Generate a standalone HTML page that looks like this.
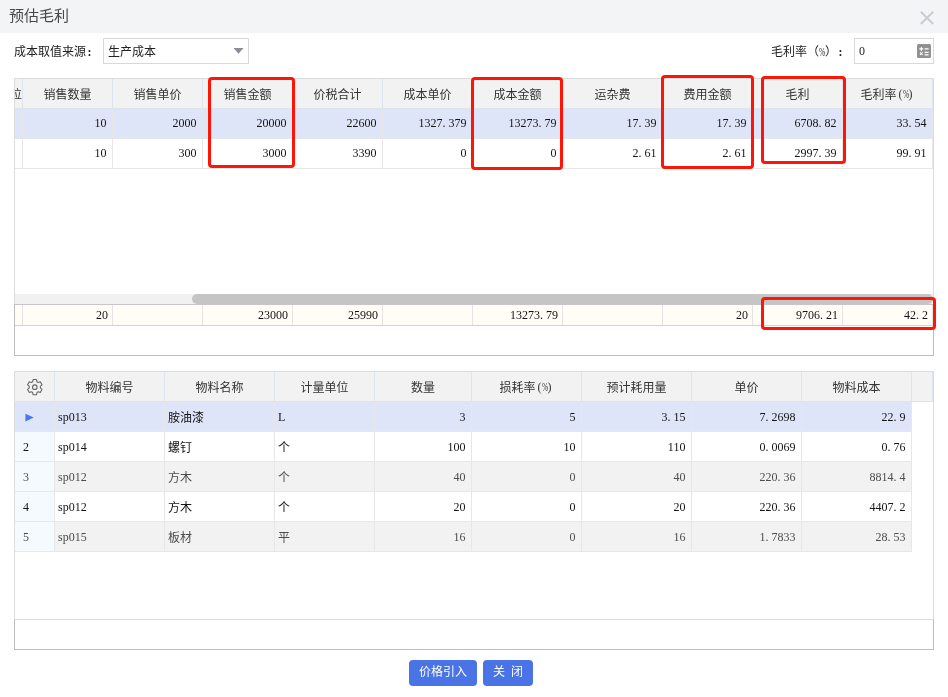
<!DOCTYPE html>
<html lang="zh-CN">
<head>
<meta charset="utf-8">
<title>预估毛利</title>
<style>
*{box-sizing:border-box;margin:0;padding:0}
body{will-change:transform}
html,body{width:948px;height:697px;overflow:hidden;background:#fff}
body{position:relative;font-family:"Liberation Serif","Noto Sans CJK SC",sans-serif;font-size:12px;color:#141414;line-height:1}
.abs{position:absolute}
#titlebar{left:0;top:0;width:948px;height:33px;background:#f3f4f6}
#title{left:9px;top:8px;font-size:15px;color:#484848;line-height:16px}
#close{left:920px;top:10.5px;width:14px;height:14px}
.lbl{font-size:12px;line-height:14px;color:#222}
.box{border:1px solid #d9d9d9;background:#fff}
/* grid */
.grid{border:1px solid #dcdcdc;background:#fff;overflow:hidden}
.row{position:absolute;left:0;height:30px;display:flex}
.row>div{height:100%;flex:none;border-right:1px solid #e7e7e7;border-bottom:1px solid #e7e7e7;line-height:29px;white-space:nowrap;overflow:hidden}
.hd{background:#f2f2f2;color:#333}
.hd>div{line-height:33px}
.hd>div{text-align:center;border-right:1px solid #dde4ee !important;border-bottom:1px solid #dde4ee !important}
.num{text-align:right;padding-right:5.6px}
.txt{text-align:left;padding-left:3px}
.sel{background:#dfe5f8}
.alt{background:#f2f2f2}
.d{letter-spacing:3px}
.row.sum{height:20px;background:#fffdf6}
.row.sum>div{line-height:21px;border-bottom:none;border-right:1px solid #e4e4e4;padding-right:4px}
.idx{padding-left:8px;position:relative;background:#f5fafe}
.sel .idx{background:transparent}
.alt{color:#4c4c4c}
.foot{border:1px solid #bdbdbd;background:transparent}
.hd>div{position:relative}
.cj{position:relative;top:1px}
.pp{position:relative;top:-1px;margin-left:2px;margin-right:2px}
.col{font-weight:bold;margin-left:1.5px}
.pc{display:inline-block;width:6px;transform:scaleX(.62);transform-origin:0 50%}
#g2 .row:not(.hd)>div{line-height:31px}
.red{border:3px solid #ff1408;border-radius:4px;background:transparent}
.btn{background:#4a74e6;color:#fff;border-radius:4px;word-spacing:3px;text-align:center;height:26px;line-height:25px;font-size:12px}
</style>
</head>
<body>
<div id="titlebar" class="abs"></div>
<div id="title" class="abs">预估毛利</div>
<svg id="close" class="abs" viewBox="0 0 14 14"><path d="M0.8 0.8 L13.2 13 M13.2 0.8 L0.8 13" stroke="#c9cdd2" stroke-width="2" fill="none"/></svg>

<div class="abs lbl" style="left:14px;top:45px">成本取值来源<span class="col">:</span></div>
<div class="abs box" style="left:103px;top:38px;width:146px;height:26px"></div>
<div class="abs lbl" style="left:108px;top:45px">生产成本</div>
<svg class="abs" style="left:233px;top:48px;width:11px;height:6px" viewBox="0 0 11 6"><path d="M0.5 0 H10.5 L5.5 5.7 Z" fill="#8a8e96"/></svg>

<div class="abs lbl" style="left:771px;top:45px">毛利率（<span class="pc">%</span>）<span class="col">:</span></div>
<div class="abs box" style="left:854px;top:38px;width:80px;height:26px"></div>
<div class="abs lbl" style="left:859px;top:44px">0</div>
<svg class="abs" style="left:917px;top:44px;width:14px;height:14px" viewBox="0 0 14 14"><rect width="14" height="14" rx="1.5" fill="#919191"/><path d="M2.3 4.9h4M4.3 2.9v4M7.6 4.9h4M7.6 8.4h4M7.6 10.9h4M3 8.3l2.6 2.6M5.6 8.3l-2.6 2.6" stroke="#fff" stroke-width="1.1" fill="none"/></svg>

<!-- TOP GRID -->
<div id="g1" class="abs grid" style="left:14px;top:78px;width:920px;height:278px">
<div class="row hd" style="top:0">
<div style="width:8px;text-align:left;text-indent:-5px">位</div>
<div style="width:90px">销售数量</div>
<div style="width:90px">销售单价</div>
<div style="width:90px">销售金额</div>
<div style="width:90px">价税合计</div>
<div style="width:90px">成本单价</div>
<div style="width:90px">成本金额</div>
<div style="width:100px">运杂费</div>
<div style="width:90px">费用金额</div>
<div style="width:90px">毛利</div>
<div style="width:90px">毛利率<span class="pp">(<span class="pc">%</span>)</span></div>
</div>
<div class="row sel" style="top:30px">
<div class="num" style="width:8px"></div>
<div class="num" style="width:90px">10</div>
<div class="num" style="width:90px">2000</div>
<div class="num" style="width:90px">20000</div>
<div class="num" style="width:90px">22600</div>
<div class="num" style="width:90px">1327<span class="d">.</span>379</div>
<div class="num" style="width:90px">13273<span class="d">.</span>79</div>
<div class="num" style="width:100px">17<span class="d">.</span>39</div>
<div class="num" style="width:90px">17<span class="d">.</span>39</div>
<div class="num" style="width:90px">6708<span class="d">.</span>82</div>
<div class="num" style="width:90px">33<span class="d">.</span>54</div>
</div>
<div class="row" style="top:60px">
<div class="num" style="width:8px"></div>
<div class="num" style="width:90px">10</div>
<div class="num" style="width:90px">300</div>
<div class="num" style="width:90px">3000</div>
<div class="num" style="width:90px">3390</div>
<div class="num" style="width:90px">0</div>
<div class="num" style="width:90px">0</div>
<div class="num" style="width:100px">2<span class="d">.</span>61</div>
<div class="num" style="width:90px">2<span class="d">.</span>61</div>
<div class="num" style="width:90px">2997<span class="d">.</span>39</div>
<div class="num" style="width:90px">99<span class="d">.</span>91</div>
</div>
<div class="abs" style="left:0;top:215px;width:918px;height:10px;background:#f1f1f1"></div>
<div class="abs" style="left:177px;top:215px;width:741px;height:10px;background:#c5c5c5;border-radius:5px"></div>
<div class="row sum" style="top:226px">
<div class="num" style="width:8px"></div>
<div class="num" style="width:90px">20</div>
<div class="num" style="width:90px"></div>
<div class="num" style="width:90px">23000</div>
<div class="num" style="width:90px">25990</div>
<div class="num" style="width:90px"></div>
<div class="num" style="width:90px">13273<span class="d">.</span>79</div>
<div class="num" style="width:100px"></div>
<div class="num" style="width:90px">20</div>
<div class="num" style="width:90px">9706<span class="d">.</span>21</div>
<div class="num" style="width:90px">42<span class="d">.</span>2</div>
</div>
<div class="abs" style="left:0;top:246px;width:918px;height:1px;background:#d2d2d2"></div>
</div>

<!-- BOTTOM GRID -->
<div id="g2" class="abs grid" style="left:14px;top:371px;width:920px;height:279px">
<div class="row hd" style="top:0">
<div style="width:40px"><svg style="position:absolute;left:10.9px;top:6px;width:17.6px;height:18.4px" preserveAspectRatio="none" viewBox="0 0 18 18"><g fill="none" stroke="#666" stroke-width="1.1"><path d="M7.3 1.5h3.4l.5 2.2 1.3.75 2.15-.7 1.7 2.95-1.65 1.5v1.5l1.65 1.5-1.7 2.95-2.15-.7-1.3.75-.5 2.2H7.3l-.5-2.2-1.3-.75-2.15.7-1.7-2.95 1.65-1.5v-1.5L1.65 6.7l1.7-2.95 2.15.7 1.3-.75z" stroke-linejoin="round"/><circle cx="9" cy="9" r="2.3"/></g></svg></div>
<div style="width:110px">物料编号</div>
<div style="width:110px">物料名称</div>
<div style="width:100px">计量单位</div>
<div style="width:97px">数量</div>
<div style="width:110px">损耗率<span class="pp">(<span class="pc">%</span>)</span></div>
<div style="width:110px">预计耗用量</div>
<div style="width:110px">单价</div>
<div style="width:110px">物料成本</div>
<div style="width:21px"></div>
</div>
<div class="row sel" style="top:30px">
<div class="idx" style="width:40px"><svg style="position:absolute;left:10px;top:10.8px;width:9.2px;height:9.2px" viewBox="0 0 10 10"><path d="M0.5 0.8 L9.5 5 L0.5 9.2 Z" fill="#4a78ea"/></svg></div>
<div class="txt" style="width:110px">sp013</div>
<div class="txt" style="width:110px"><span class="cj">胺油漆</span></div>
<div class="txt" style="width:100px">L</div>
<div class="num" style="width:97px">3</div>
<div class="num" style="width:110px">5</div>
<div class="num" style="width:110px">3<span class="d">.</span>15</div>
<div class="num" style="width:110px">7<span class="d">.</span>2698</div>
<div class="num" style="width:110px">22<span class="d">.</span>9</div>
</div>
<div class="row" style="top:60px">
<div class="idx" style="width:40px">2</div>
<div class="txt" style="width:110px">sp014</div>
<div class="txt" style="width:110px"><span class="cj">螺钉</span></div>
<div class="txt" style="width:100px"><span class="cj">个</span></div>
<div class="num" style="width:97px">100</div>
<div class="num" style="width:110px">10</div>
<div class="num" style="width:110px">110</div>
<div class="num" style="width:110px">0<span class="d">.</span>0069</div>
<div class="num" style="width:110px">0<span class="d">.</span>76</div>
</div>
<div class="row alt" style="top:90px">
<div class="idx" style="width:40px">3</div>
<div class="txt" style="width:110px">sp012</div>
<div class="txt" style="width:110px"><span class="cj">方木</span></div>
<div class="txt" style="width:100px"><span class="cj">个</span></div>
<div class="num" style="width:97px">40</div>
<div class="num" style="width:110px">0</div>
<div class="num" style="width:110px">40</div>
<div class="num" style="width:110px">220<span class="d">.</span>36</div>
<div class="num" style="width:110px">8814<span class="d">.</span>4</div>
</div>
<div class="row" style="top:120px">
<div class="idx" style="width:40px">4</div>
<div class="txt" style="width:110px">sp012</div>
<div class="txt" style="width:110px"><span class="cj">方木</span></div>
<div class="txt" style="width:100px"><span class="cj">个</span></div>
<div class="num" style="width:97px">20</div>
<div class="num" style="width:110px">0</div>
<div class="num" style="width:110px">20</div>
<div class="num" style="width:110px">220<span class="d">.</span>36</div>
<div class="num" style="width:110px">4407<span class="d">.</span>2</div>
</div>
<div class="row alt" style="top:150px">
<div class="idx" style="width:40px">5</div>
<div class="txt" style="width:110px">sp015</div>
<div class="txt" style="width:110px"><span class="cj">板材</span></div>
<div class="txt" style="width:100px"><span class="cj">平</span></div>
<div class="num" style="width:97px">16</div>
<div class="num" style="width:110px">0</div>
<div class="num" style="width:110px">16</div>
<div class="num" style="width:110px">1<span class="d">.</span>7833</div>
<div class="num" style="width:110px">28<span class="d">.</span>53</div>
</div>
</div>
<!-- BUTTONS -->
<!-- FOOT BOXES -->
<div class="abs foot" style="left:14px;top:304px;width:920px;height:52px;border-top-color:#c6c6c6"></div>
<div class="abs foot" style="left:14px;top:619px;width:920px;height:31px;border-top-color:#dcdcdc"></div>
<!-- RED BOXES -->
<div class="abs red" style="left:208px;top:77px;width:87px;height:91px"></div>
<div class="abs red" style="left:471px;top:77px;width:92px;height:93px"></div>
<div class="abs red" style="left:661px;top:75px;width:93px;height:94px"></div>
<div class="abs red" style="left:761px;top:76px;width:85px;height:88px"></div>
<div class="abs red" style="left:761px;top:297px;width:175px;height:33px"></div>
<div class="abs btn" style="left:409px;top:660px;width:68px">价格引入</div>
<div class="abs btn" style="left:483px;top:660px;width:50px">关 闭</div>
</body>
</html>
